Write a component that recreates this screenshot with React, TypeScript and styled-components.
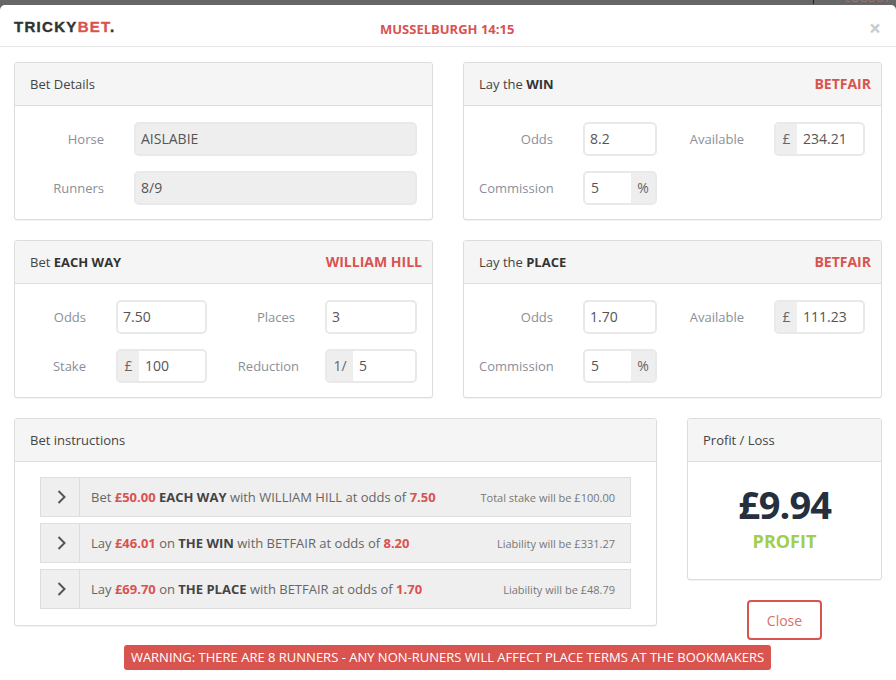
import React from 'react'
import styled, { createGlobalStyle } from 'styled-components'

const RED = '#d9534f'

const GlobalStyle = createGlobalStyle`
  * { box-sizing: border-box; }
  html, body { margin: 0; padding: 0; background: #fff; }
  body { font-family: "Open Sans", sans-serif; font-size: 13px; color: #333; }
`

const App: React.FC = () => {
  return (
    <Page>
      <GlobalStyle />
      <Backdrop>
        <TopDivider />
        <TopLink>LOGOUT</TopLink>
      </Backdrop>
      <Modal>
        <Header>
          <Logo>TRICKY<span>BET</span>.</Logo>
          <RaceTitle>MUSSELBURGH 14:15</RaceTitle>
          <Dismiss>×</Dismiss>
        </Header>
        <Body>
          <TwoCols>
            <Panel>
              <PanelHead>Bet Details</PanelHead>
              <FormGrid $cols="74px 283px">
                <Label>Horse</Label>
                <Input $readOnly>AISLABIE</Input>
                <Label>Runners</Label>
                <Input $readOnly>8/9</Input>
              </FormGrid>
            </Panel>
            <Panel>
              <PanelHead>
                <span>Lay the <b>WIN</b></span>
                <Bookie>BETFAIR</Bookie>
              </PanelHead>
              <FormGrid $cols="74px 74px 57px 91px">
                <Label>Odds</Label>
                <Input>8.2</Input>
                <Label>Available</Label>
                <Input><Addon>£</Addon><Value>234.21</Value></Input>
                <Label>Commission</Label>
                <Input><Value>5</Value><Addon $right>%</Addon></Input>
              </FormGrid>
            </Panel>
            <Panel>
              <PanelHead>
                <span>Bet <b>EACH WAY</b></span>
                <Bookie>WILLIAM HILL</Bookie>
              </PanelHead>
              <FormGrid $cols="56px 91px 58px 92px">
                <Label>Odds</Label>
                <Input>7.50</Input>
                <Label>Places</Label>
                <Input>3</Input>
                <Label>Stake</Label>
                <Input><Addon>£</Addon><Value>100</Value></Input>
                <Label $overhang>Reduction</Label>
                <Input><Addon $wide>1/</Addon><Value>5</Value></Input>
              </FormGrid>
            </Panel>
            <Panel>
              <PanelHead>
                <span>Lay the <b>PLACE</b></span>
                <Bookie>BETFAIR</Bookie>
              </PanelHead>
              <FormGrid $cols="74px 74px 57px 91px">
                <Label>Odds</Label>
                <Input>1.70</Input>
                <Label>Available</Label>
                <Input><Addon>£</Addon><Value>111.23</Value></Input>
                <Label>Commission</Label>
                <Input><Value>5</Value><Addon $right>%</Addon></Input>
              </FormGrid>
            </Panel>
          </TwoCols>
          <BottomRow>
            <Panel>
              <PanelHead>Bet instructions</PanelHead>
              <Steps>
                <Step>
                  <Toggle><Chevron /></Toggle>
                  <StepText>
                    Bet <Money>£50.00</Money> <strong>EACH WAY</strong> with WILLIAM HILL at odds of <Money>7.50</Money>
                  </StepText>
                  <StepNote>Total stake will be £100.00</StepNote>
                </Step>
                <Step>
                  <Toggle><Chevron /></Toggle>
                  <StepText>
                    Lay <Money>£46.01</Money> on <strong>THE WIN</strong> with BETFAIR at odds of <Money>8.20</Money>
                  </StepText>
                  <StepNote>Liability will be £331.27</StepNote>
                </Step>
                <Step>
                  <Toggle><Chevron /></Toggle>
                  <StepText>
                    Lay <Money>£69.70</Money> on <strong>THE PLACE</strong> with BETFAIR at odds of <Money>1.70</Money>
                  </StepText>
                  <StepNote>Liability will be £48.79</StepNote>
                </Step>
              </Steps>
            </Panel>
            <SideCol>
              <Panel>
                <PanelHead>Profit / Loss</PanelHead>
                <Result>
                  <Amount>£9.94</Amount>
                  <Outcome>PROFIT</Outcome>
                </Result>
              </Panel>
              <CloseButton>Close</CloseButton>
            </SideCol>
          </BottomRow>
          <WarningRow>
            <Warning>WARNING: THERE ARE 8 RUNNERS - ANY NON-RUNERS WILL AFFECT PLACE TERMS AT THE BOOKMAKERS</Warning>
          </WarningRow>
        </Body>
      </Modal>
    </Page>
  )
}
export default App

const Chevron: React.FC = () => (
  <svg width="9" height="14" viewBox="0 0 9 14" fill="none">
    <path d="M1.5 1 L7.5 7 L1.5 13" stroke="#555" strokeWidth="2" />
  </svg>
)

const Page = styled.div`
  width: 896px;
  height: 680px;
  overflow: hidden;
  background: #666;
`

const Backdrop = styled.div`
  height: 5px;
  overflow: hidden;
  display: flex;
  justify-content: flex-end;
  padding-right: 6px;
`

const TopDivider = styled.div`
  width: 1px;
  height: 4px;
  margin-right: 31px;
  background: #222;
`

const TopLink = styled.div`
  margin-top: -9px;
  font-size: 11px;
  line-height: 14px;
  color: #b06c6a;
`

const Modal = styled.div`
  height: 675px;
  background: #fff;
  border-radius: 5px 5px 0 0;
`

const Header = styled.div`
  height: 42px;
  padding: 0 14px;
  display: flex;
  align-items: center;
  border-bottom: 1px solid #e5e5e5;
`

const Logo = styled.div`
  width: 366px;
  font-family: "Liberation Sans", Arial, sans-serif;
  font-size: 15px;
  font-weight: 700;
  letter-spacing: 1.3px;
  color: #333;
  margin-top: 1px;
  -webkit-text-stroke: 0.4px currentColor;
  span { color: ${RED}; }
`

const RaceTitle = styled.div`
  flex: 1;
  margin-top: 6px;
  font-size: 13px;
  font-weight: 700;
  color: ${RED};
`

const Dismiss = styled.div`
  margin-top: 5px;
  margin-right: 1px;
  font-size: 21px;
  font-weight: 700;
  color: #ccc;
  line-height: 1;
`

const Body = styled.div`
  padding: 15px 14px 0;
`

const TwoCols = styled.div`
  display: grid;
  grid-template-columns: 419px 419px;
  column-gap: 30px;
  row-gap: 20px;
`

const BottomRow = styled.div`
  display: grid;
  grid-template-columns: 643px 195px;
  column-gap: 30px;
  align-items: start;
  margin-top: 20px;
`

const SideCol = styled.div`
  display: flex;
  flex-direction: column;
  align-items: center;
  > div { align-self: stretch; }
`

const Panel = styled.div`
  background: #fff;
  border: 1px solid #ddd;
  border-radius: 3px;
  box-shadow: 0 1px 1px rgba(0, 0, 0, 0.05);
  overflow: hidden;
`

const PanelHead = styled.div`
  height: 43px;
  padding: 0 10px 0 15px;
  display: flex;
  align-items: center;
  justify-content: space-between;
  background: #f5f5f5;
  border-bottom: 1px solid #ddd;
  font-size: 13px;
  color: #444;
  b { font-weight: 700; color: #333; }
`

const Bookie = styled.span`
  margin-top: -2px;
  font-size: 14px;
  font-weight: 700;
  color: ${RED};
`

const FormGrid = styled.div<{ $cols: string }>`
  display: grid;
  grid-template-columns: ${(p) => p.$cols};
  column-gap: 30px;
  row-gap: 15px;
  padding: 16px 15px 14px;
  justify-content: start;
  > :nth-child(5) { grid-column: 1; }
`

const Label = styled.div<{ $overhang?: boolean }>`
  align-self: center;
  text-align: right;
  font-size: 13px;
  color: #8a8f99;
  white-space: nowrap;
  margin-right: ${(p) => (p.$overhang ? '-4px' : '0')};
`

const Input = styled.div<{ $readOnly?: boolean }>`
  height: 34px;
  display: flex;
  align-items: stretch;
  line-height: 30px;
  border: 2px solid ${(p) => (p.$readOnly ? '#e9e9e9' : '#e9e9e9')};
  border-radius: 5px;
  background: ${(p) => (p.$readOnly ? '#eee' : '#fff')};
  font-size: 14px;
  color: #555;
  text-indent: 5px;
  overflow: hidden;
`

const Addon = styled.span<{ $right?: boolean; $wide?: boolean }>`
  flex: none;
  width: ${(p) => (p.$wide ? '26px' : p.$right ? '24px' : '21px')};
  background: #eee;
  text-indent: 0;
  text-align: center;
  font-size: 14px;
  color: #666;
`

const Value = styled.span`
  flex: 1;
  text-indent: 6px;
`

const Steps = styled.div`
  padding: 15px 25px 16px;
  display: flex;
  flex-direction: column;
  gap: 6px;
`

const Step = styled.div`
  height: 40px;
  display: flex;
  align-items: center;
  background: #efefef;
  border: 1px solid #ddd;
  font-size: 13px;
  color: #666;
`

const Toggle = styled.div`
  align-self: stretch;
  width: 39px;
  flex: none;
  display: flex;
  align-items: center;
  justify-content: center;
  padding-left: 3px;
  border-right: 1px solid #ddd;
`

const StepText = styled.div`
  flex: 1;
  padding-left: 11px;
  strong { font-weight: 700; color: #444; }
`

const Money = styled.span`
  font-weight: 700;
  color: ${RED};
`

const StepNote = styled.div`
  padding-right: 15px;
  font-size: 11px;
  color: #777;
`

const Result = styled.div`
  height: 117px;
  display: flex;
  flex-direction: column;
  align-items: center;
  padding-top: 19px;
`

const Amount = styled.div`
  font-size: 38px;
  font-weight: 700;
  line-height: 47px;
  letter-spacing: -1px;
  color: #252f3e;
`

const Outcome = styled.div`
  font-size: 18px;
  font-weight: 700;
  line-height: 26px;
  color: #a0ce4e;
`

const CloseButton = styled.button`
  width: 75px;
  height: 40px;
  margin-top: 20px;
  background: #fff;
  border: 2px solid ${RED};
  border-radius: 4px;
  font-family: inherit;
  font-size: 14px;
  color: #d9706c;
`

const WarningRow = styled.div`
  display: flex;
  justify-content: center;
  margin-top: 5px;
  padding-right: 1px;
`

const Warning = styled.div`
  height: 25px;
  padding: 0 6.5px;
  line-height: 25px;
  background: ${RED};
  border-radius: 3px;
  font-size: 13px;
  color: #fff;
  white-space: nowrap;
`
